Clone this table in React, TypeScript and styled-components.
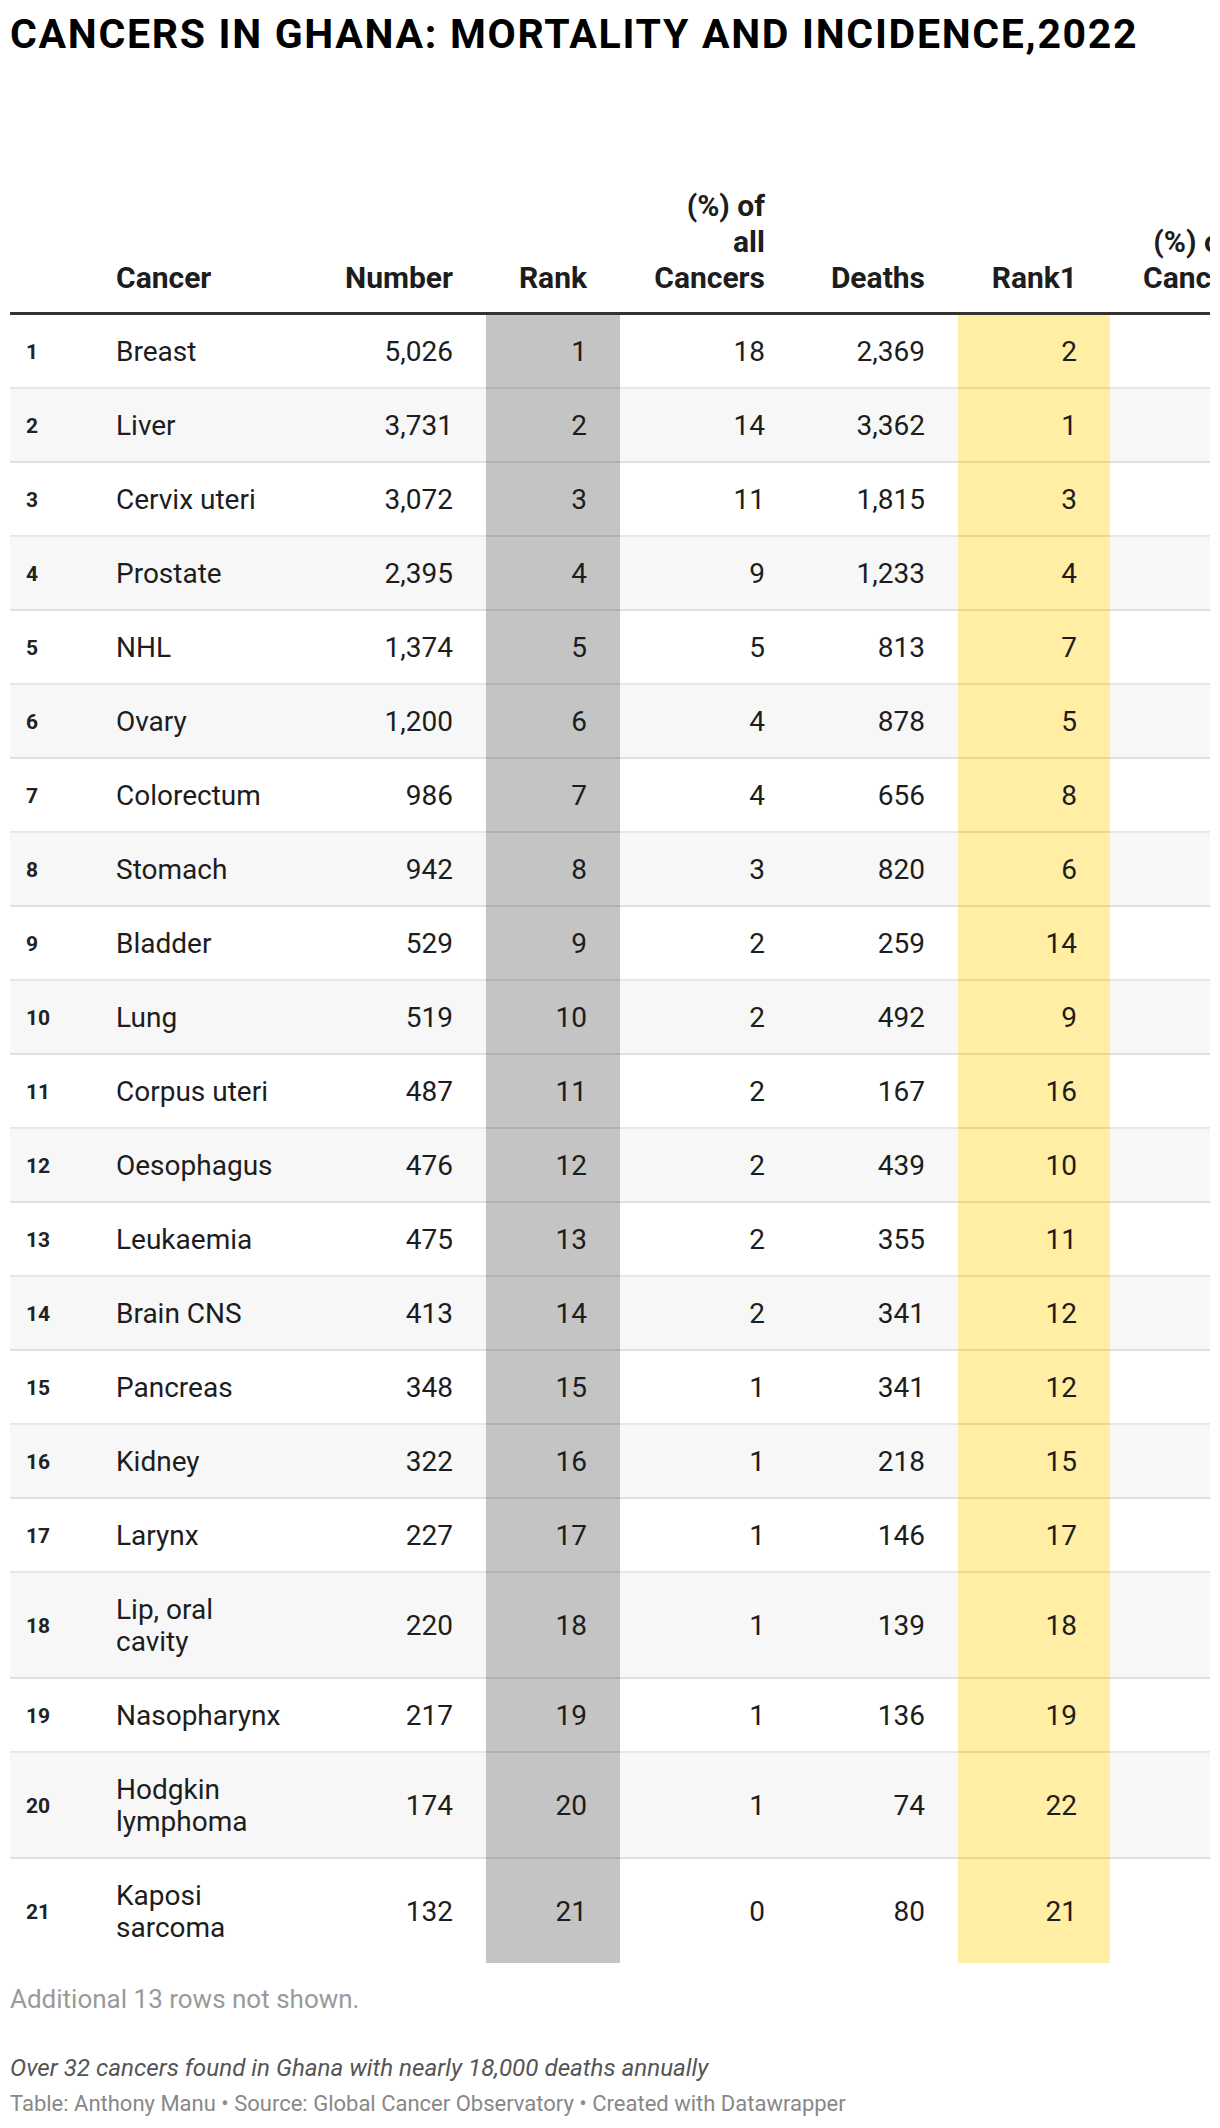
import React from "react";
import styled, { createGlobalStyle } from "styled-components";

const GlobalStyle = createGlobalStyle`
  html, body { margin: 0; padding: 0; background: #ffffff; }
  body { font-family: Roboto, "Liberation Sans", Arial, sans-serif; }
`;

type Row = {
  name: string;
  number: string;
  rank: string;
  pct: string;
  deaths: string;
  rank1: string;
  pct2: string;
};

const rows: Row[] = [
  { name: "Breast", number: "5,026", rank: "1", pct: "18", deaths: "2,369", rank1: "2", pct2: "13" },
  { name: "Liver", number: "3,731", rank: "2", pct: "14", deaths: "3,362", rank1: "1", pct2: "19" },
  { name: "Cervix uteri", number: "3,072", rank: "3", pct: "11", deaths: "1,815", rank1: "3", pct2: "10" },
  { name: "Prostate", number: "2,395", rank: "4", pct: "9", deaths: "1,233", rank1: "4", pct2: "7" },
  { name: "NHL", number: "1,374", rank: "5", pct: "5", deaths: "813", rank1: "7", pct2: "5" },
  { name: "Ovary", number: "1,200", rank: "6", pct: "4", deaths: "878", rank1: "5", pct2: "5" },
  { name: "Colorectum", number: "986", rank: "7", pct: "4", deaths: "656", rank1: "8", pct2: "4" },
  { name: "Stomach", number: "942", rank: "8", pct: "3", deaths: "820", rank1: "6", pct2: "5" },
  { name: "Bladder", number: "529", rank: "9", pct: "2", deaths: "259", rank1: "14", pct2: "1" },
  { name: "Lung", number: "519", rank: "10", pct: "2", deaths: "492", rank1: "9", pct2: "3" },
  { name: "Corpus uteri", number: "487", rank: "11", pct: "2", deaths: "167", rank1: "16", pct2: "1" },
  { name: "Oesophagus", number: "476", rank: "12", pct: "2", deaths: "439", rank1: "10", pct2: "2" },
  { name: "Leukaemia", number: "475", rank: "13", pct: "2", deaths: "355", rank1: "11", pct2: "2" },
  { name: "Brain CNS", number: "413", rank: "14", pct: "2", deaths: "341", rank1: "12", pct2: "2" },
  { name: "Pancreas", number: "348", rank: "15", pct: "1", deaths: "341", rank1: "12", pct2: "2" },
  { name: "Kidney", number: "322", rank: "16", pct: "1", deaths: "218", rank1: "15", pct2: "1" },
  { name: "Larynx", number: "227", rank: "17", pct: "1", deaths: "146", rank1: "17", pct2: "1" },
  { name: "Lip, oral cavity", number: "220", rank: "18", pct: "1", deaths: "139", rank1: "18", pct2: "1" },
  { name: "Nasopharynx", number: "217", rank: "19", pct: "1", deaths: "136", rank1: "19", pct2: "1" },
  { name: "Hodgkin lymphoma", number: "174", rank: "20", pct: "1", deaths: "74", rank1: "22", pct2: "0" },
  { name: "Kaposi sarcoma", number: "132", rank: "21", pct: "0", deaths: "80", rank1: "21", pct2: "0" },
];

const Page = styled.div`
  padding: 10px 10px 0;
  color: #1d1d1d;
  font-family: Roboto, "Liberation Sans", Arial, sans-serif;
`;

const Title = styled.h1`
  margin: 0;
  font-size: 41px;
  line-height: 48px;
  font-weight: 700;
  color: #000000;
  letter-spacing: 1.7px;
  white-space: nowrap;
`;

const TableWrap = styled.div`
  margin-top: 130px;
  width: 100%;
  overflow: hidden;
`;

const Table = styled.table`
  border-collapse: separate;
  border-spacing: 0;
  table-layout: fixed;
  width: 1294px;
`;

const Col = styled.col<{ $w: number }>`
  width: ${(p) => p.$w}px;
`;

type Tone = "plain" | "grey" | "yellow";

const toneBg = (tone: Tone | undefined, striped: boolean) => {
  if (tone === "grey") return "#c4c4c4";
  if (tone === "yellow") return "#ffeea4";
  return striped ? "#f7f7f7" : "#ffffff";
};

const HeadCell = styled.th<{ $align?: "left" | "right" }>`
  vertical-align: bottom;
  text-align: ${(p) => p.$align ?? "right"};
  font-size: 30px;
  line-height: 36px;
  font-weight: 700;
  color: #1d1d1d;
  white-space: nowrap;
  padding: 0 ${(p) => (p.$align === "left" ? "12px" : "33px")} 16px
    ${(p) => (p.$align === "left" ? "16px" : "8px")};
  border-bottom: 3px solid #333333;
`;

const Cell = styled.td<{ $tone?: Tone; $striped: boolean; $last: boolean; $align?: "left" | "right" }>`
  vertical-align: middle;
  text-align: ${(p) => p.$align ?? "right"};
  font-size: 28px;
  line-height: 32px;
  font-weight: 400;
  color: #1d1d1d;
  padding: 21px ${(p) => (p.$align === "left" ? "12px" : "33px")} 19px
    ${(p) => (p.$align === "left" ? "16px" : "8px")};
  background: ${(p) => toneBg(p.$tone, p.$striped)};
  border-bottom: ${(p) => (p.$last ? "0" : "2px solid rgba(0, 0, 0, 0.09)")};
`;

const IndexCell = styled(Cell)`
  font-size: 21px;
  font-weight: 700;
  color: #222222;
`;

const FootNote = styled.div`
  margin-top: 20px;
  font-size: 26px;
  line-height: 32px;
  color: #9a9a9a;
`;

const Notes = styled.div`
  margin-top: 38px;
  font-size: 24.2px;
  line-height: 30px;
  font-style: italic;
  color: #555555;
`;

const Source = styled.div`
  margin-top: 7px;
  font-size: 22px;
  line-height: 28px;
  color: #888888;
`;

export default function App() {
  return (
    <>
      <GlobalStyle />
      <Page>
        <Title>CANCERS IN GHANA: MORTALITY AND INCIDENCE,2022</Title>
        <TableWrap>
          <Table>
            <colgroup>
              <Col $w={90} />
              <Col $w={200} />
              <Col $w={186} />
              <Col $w={134} />
              <Col $w={178} />
              <Col $w={160} />
              <Col $w={152} />
              <Col $w={194} />
            </colgroup>
            <thead>
              <tr>
                <HeadCell $align="left"></HeadCell>
                <HeadCell $align="left">Cancer</HeadCell>
                <HeadCell>Number</HeadCell>
                <HeadCell>Rank</HeadCell>
                <HeadCell>
                  (%) of
                  <br />
                  all
                  <br />
                  Cancers
                </HeadCell>
                <HeadCell>Deaths</HeadCell>
                <HeadCell>Rank1</HeadCell>
                <HeadCell>
                  (%) of all
                  <br />
                  Cancers1
                </HeadCell>
              </tr>
            </thead>
            <tbody>
              {rows.map((r, i) => {
                const striped = i % 2 === 1;
                const last = i === rows.length - 1;
                return (
                  <tr key={r.name}>
                    <IndexCell $align="left" $striped={striped} $last={last}>
                      {i + 1}
                    </IndexCell>
                    <Cell $align="left" $striped={striped} $last={last}>
                      {r.name}
                    </Cell>
                    <Cell $striped={striped} $last={last}>{r.number}</Cell>
                    <Cell $tone="grey" $striped={striped} $last={last}>{r.rank}</Cell>
                    <Cell $striped={striped} $last={last}>{r.pct}</Cell>
                    <Cell $striped={striped} $last={last}>{r.deaths}</Cell>
                    <Cell $tone="yellow" $striped={striped} $last={last}>{r.rank1}</Cell>
                    <Cell $striped={striped} $last={last}>{r.pct2}</Cell>
                  </tr>
                );
              })}
            </tbody>
          </Table>
        </TableWrap>
        <FootNote>Additional 13 rows not shown.</FootNote>
        <Notes>Over 32 cancers found in Ghana with nearly 18,000 deaths annually</Notes>
        <Source>Table: Anthony Manu • Source: Global Cancer Observatory • Created with Datawrapper</Source>
      </Page>
    </>
  );
}
